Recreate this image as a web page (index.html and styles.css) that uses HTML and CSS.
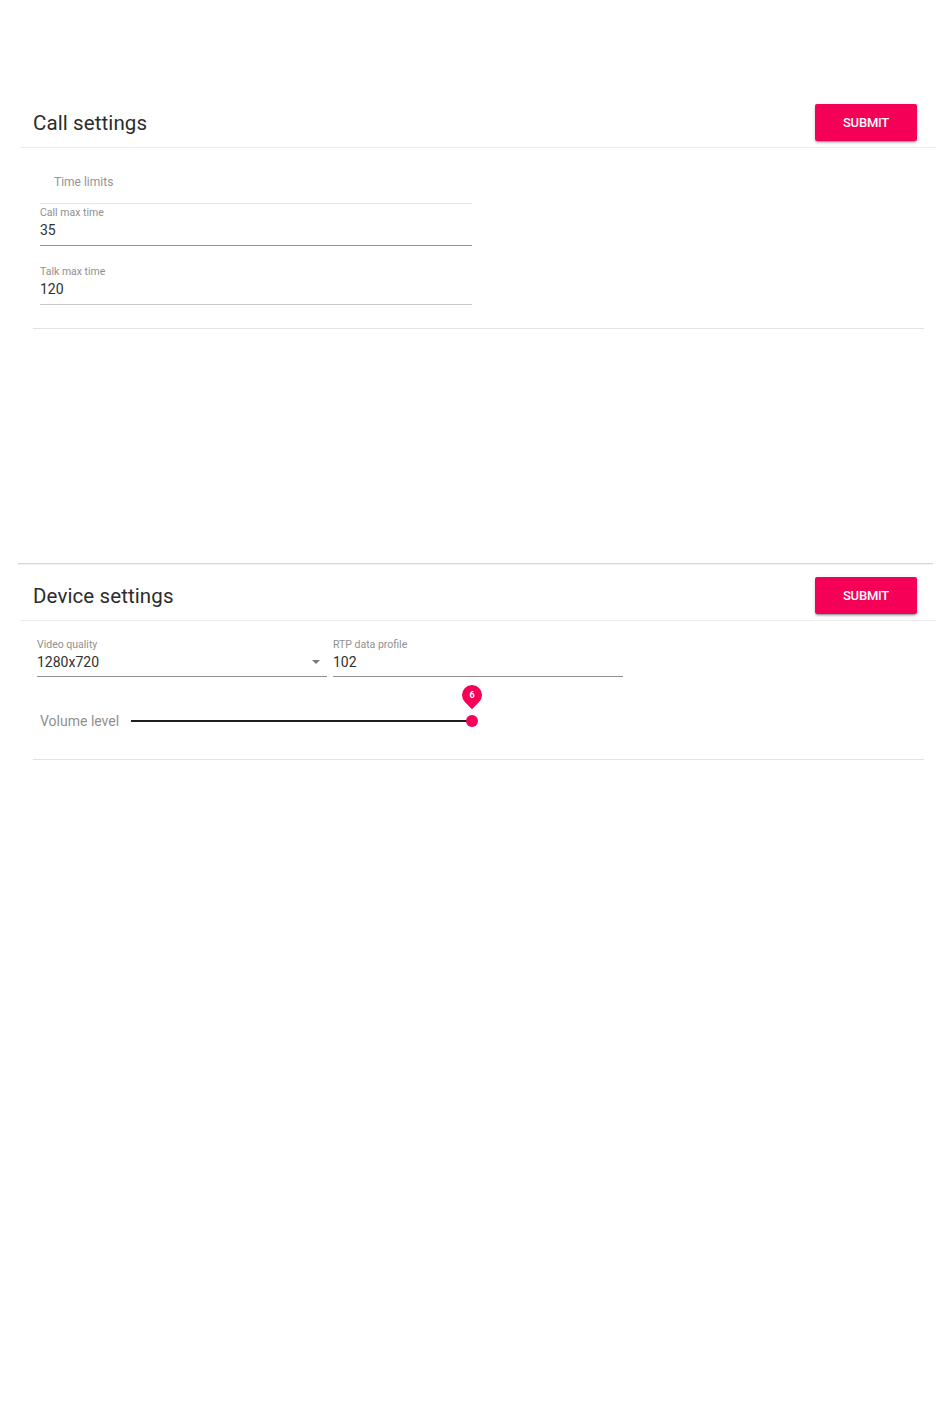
FILE: index.html
```html
<!DOCTYPE html>
<html>
<head>
<meta charset="utf-8">
<link rel="stylesheet" href="styles.css">
</head>
<body>
<div class="page">
  <section class="card card-call">
    <div class="card-header">
      <h2 class="card-title">Call settings</h2>
      <button class="btn-submit">SUBMIT</button>
    </div>
    <div class="card-body">
      <div class="form-col">
        <div class="subheader">Time limits</div>
        <div class="field field-first field-focus">
          <div class="field-label">Call max time</div>
          <div class="field-value">35</div>
        </div>
        <div class="field field-second">
          <div class="field-label">Talk max time</div>
          <div class="field-value">120</div>
        </div>
      </div>
    </div>
  </section>

  <div class="separator"></div>

  <section class="card card-device">
    <div class="card-header header-device">
      <h2 class="card-title">Device settings</h2>
      <button class="btn-submit">SUBMIT</button>
    </div>
    <div class="card-body">
      <div class="field-row">
        <div class="field field-inline">
          <div class="field-label">Video quality</div>
          <div class="field-value select-value">
            <span>1280x720</span>
            <span class="arrow"></span>
          </div>
        </div>
        <div class="field field-inline">
          <div class="field-label">RTP data profile</div>
          <div class="field-value">102</div>
        </div>
      </div>
      <div class="slider-row">
        <div class="slider-label">Volume level</div>
        <div class="slider">
          <div class="slider-thumb"></div>
          <div class="slider-pin"><span>6</span></div>
        </div>
      </div>
    </div>
  </section>
</div>
</body>
</html>
```

FILE: styles.css
```css
* { box-sizing: border-box; }

html, body {
  margin: 0;
  padding: 0;
  background: #ffffff;
}

body {
  font-family: Roboto, "Liberation Sans", Arial, sans-serif;
  color: #212121;
}

.page {
  padding-top: 100px;
  width: 950px;
}

.card {
  margin-left: 20px;
  width: 916px;
}

.card-header {
  display: flex;
  align-items: center;
  justify-content: space-between;
  padding: 4px 19px 6px 13px;
  border-bottom: 1px solid #ececec;
}

.header-device {
  padding-top: 13px;
}

.card-title {
  margin: 0;
  font-size: 20.5px;
  font-weight: 400;
  line-height: 24px;
  color: #2c2c2c;
  letter-spacing: 0.1px;
}

.btn-submit {
  width: 102px;
  height: 37px;
  border: none;
  border-radius: 2px;
  background: #f50057;
  color: #ffffff;
  font-family: Roboto, "Liberation Sans", Arial, sans-serif;
  font-size: 13px;
  font-weight: 500;
  letter-spacing: -0.2px;
  padding: 0;
  box-shadow: 0 3px 1px -2px rgba(0,0,0,0.2), 0 2px 2px 0 rgba(0,0,0,0.14), 0 1px 5px 0 rgba(0,0,0,0.12);
}

.card-body {
  margin-left: 13px;
  margin-right: 12px;
  border-bottom: 1px solid #e3e3e3;
}

.card-call .card-body {
  padding-bottom: 23px;
}

.form-col {
  margin-left: 7px;
  width: 432px;
}

.subheader {
  height: 56px;
  padding-top: 25px;
  padding-left: 14px;
  font-size: 12px;
  line-height: 18px;
  color: #939393;
  border-bottom: 1px solid #e6e6e6;
}

.field {
  border-bottom: 1px solid #c9c9c9;
  padding-bottom: 5px;
}

.field-focus {
  border-bottom-color: #949494;
}

.field-first {
  margin-top: 2px;
}

.field-second {
  margin-top: 19px;
}

.field-label {
  font-size: 10.5px;
  line-height: 12px;
  padding-top: 1px;
  margin-bottom: -1px;
  color: #909090;
}

.field-value {
  margin-top: 2px;
  font-size: 14px;
  line-height: 20px;
  color: #303030;
}

.field-row {
  display: flex;
  gap: 6px;
  margin-left: 4px;
  padding-top: 17px;
}

.field-inline {
  width: 290px;
  padding-bottom: 4px;
  border-bottom-color: #8f8f8f;
}

.select-value {
  display: flex;
  align-items: center;
  justify-content: space-between;
  padding-right: 7px;
}

.arrow {
  width: 0;
  height: 0;
  border-left: 4px solid transparent;
  border-right: 4px solid transparent;
  border-top: 4px solid #7a7a7a;
}

.slider-row {
  display: flex;
  align-items: center;
  gap: 13px;
  height: 40px;
  margin-top: 24px;
  margin-bottom: 18px;
  margin-left: 7px;
}

.slider-label {
  font-size: 14px;
  color: #8f8f8f;
  width: 78px;
  white-space: nowrap;
}

.slider {
  position: relative;
  width: 341px;
  height: 2px;
  background: #1f1f1f;
}

.slider-thumb {
  position: absolute;
  right: -6px;
  top: -5px;
  width: 12px;
  height: 12px;
  border-radius: 50%;
  background: #f50057;
}

.slider-pin {
  position: absolute;
  right: -10px;
  top: -35px;
  width: 20px;
  height: 20px;
  border-radius: 50% 50% 50% 0;
  transform: rotate(-45deg);
  background: #f50057;
  display: flex;
  align-items: center;
  justify-content: center;
}

.slider-pin span {
  transform: rotate(45deg);
  color: #ffffff;
  font-size: 9px;
  font-weight: 700;
  line-height: 1;
}

.separator {
  margin-top: 234px;
  margin-left: 18px;
  width: 915px;
  height: 1px;
  background: #d4d4d4;
  box-shadow: 0 1px 1px rgba(0,0,0,0.06);
}
```
